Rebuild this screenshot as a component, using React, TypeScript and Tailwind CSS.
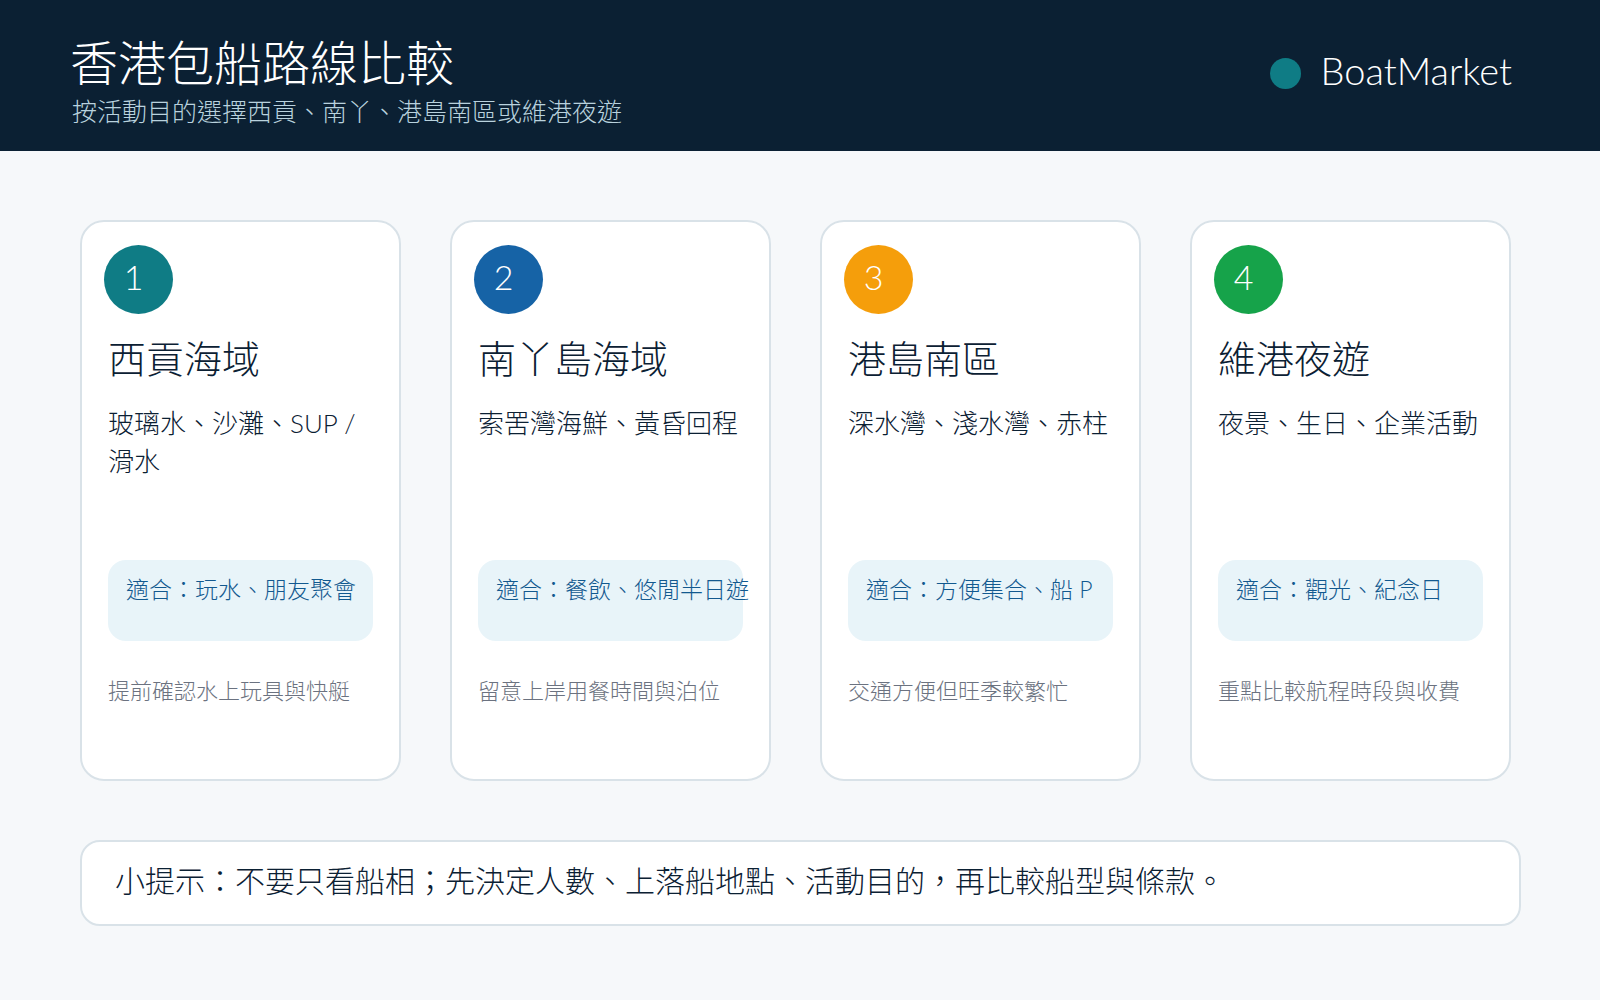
const font = "font-['Century_Gothic','URW_Gothic','Lato','Noto_Sans_CJK_TC',sans-serif] font-light";

const cards = [
  { n: "1", color: "bg-[#0f7c85]", title: "西貢海域", desc: "玻璃水、沙灘、SUP / 滑水", fit: "適合\uFF1A玩水、朋友聚會", note: "提前確認水上玩具與快艇" },
  { n: "2", color: "bg-[#1663a6]", title: "南丫島海域", desc: "索罟灣海鮮、黃昏回程", fit: "適合\uFF1A餐飲、悠閒半日遊", note: "留意上岸用餐時間與泊位" },
  { n: "3", color: "bg-[#f59e0b]", title: "港島南區", desc: "深水灣、淺水灣、赤柱", fit: "適合\uFF1A方便集合、船 P", note: "交通方便但旺季較繁忙" },
  { n: "4", color: "bg-[#16a34a]", title: "維港夜遊", desc: "夜景、生日、企業活動", fit: "適合\uFF1A觀光、紀念日", note: "重點比較航程時段與收費" },
];

const tip = "小提示\uFF1A不要只看船相\uFF1B先決定人數、上落船地點、活動目的\uFF0C再比較船型與條款。";

export default function App() {
  return (
    <div className={`${font} w-[1600px] h-[1000px] overflow-hidden bg-[#f6f8fa] text-[#0b2033]`}>
      <header className="h-[151px] bg-[#0b2033] flex items-start justify-between pl-[72px] pr-[88px]">
        <div className="pt-[35px]">
          <h1 className="-ml-[2px] text-[48px] leading-[56px] text-white">香港包船路線比較</h1>
          <p className="text-[25px] leading-[30px] mt-[5px] text-[#b9d2de] whitespace-nowrap">按活動目的選擇西貢、南丫、港島南區或維港夜遊</p>
        </div>
        <div className="flex items-start gap-[20px] pt-[49px]">
          <span className="mt-[9px] w-[31px] h-[31px] rounded-full bg-[#0f7c85]" />
          <span className="text-[38px] leading-[42px] text-white">BoatMarket</span>
        </div>
      </header>
      <main className="pt-[69px] pl-[80px]">
        <div className="flex gap-[49px]">
          {cards.map((c) => (
            <section key={c.n} className="w-[321px] h-[561px] bg-white border-2 border-[#d9e2e8] rounded-[24px] pt-[23px] pl-[22px]">
              <div className={`w-[69px] h-[69px] rounded-full ${c.color} flex items-center justify-center pr-[10px] pb-[6px] text-white text-[34px] leading-none`}>{c.n}</div>
              <h2 className="mt-[21px] ml-[4px] text-[38px] leading-[46px] whitespace-nowrap">{c.title}</h2>
              <p className="mt-[23px] ml-[4px] w-[262px] h-[156px] text-[26px] leading-[38px]">{c.desc}</p>
              <div className="ml-[4px] w-[265px] h-[81px] rounded-[18px] bg-[#e8f4f9] pl-[18px] pt-[13px] text-[23px] leading-[32px] text-[#12598f] whitespace-nowrap">{c.fit}</div>
              <p className="mt-[35px] ml-[4px] text-[22px] leading-[30px] text-[#6b7280] whitespace-nowrap">{c.note}</p>
            </section>
          ))}
        </div>
        <div className="mt-[59px] w-[1441px] h-[86px] bg-white border-2 border-[#d9e2e8] rounded-[20px] pl-[33px] pt-[18px] text-[30px] leading-[40px] whitespace-nowrap">
          {tip}
        </div>
      </main>
    </div>
  );
}
